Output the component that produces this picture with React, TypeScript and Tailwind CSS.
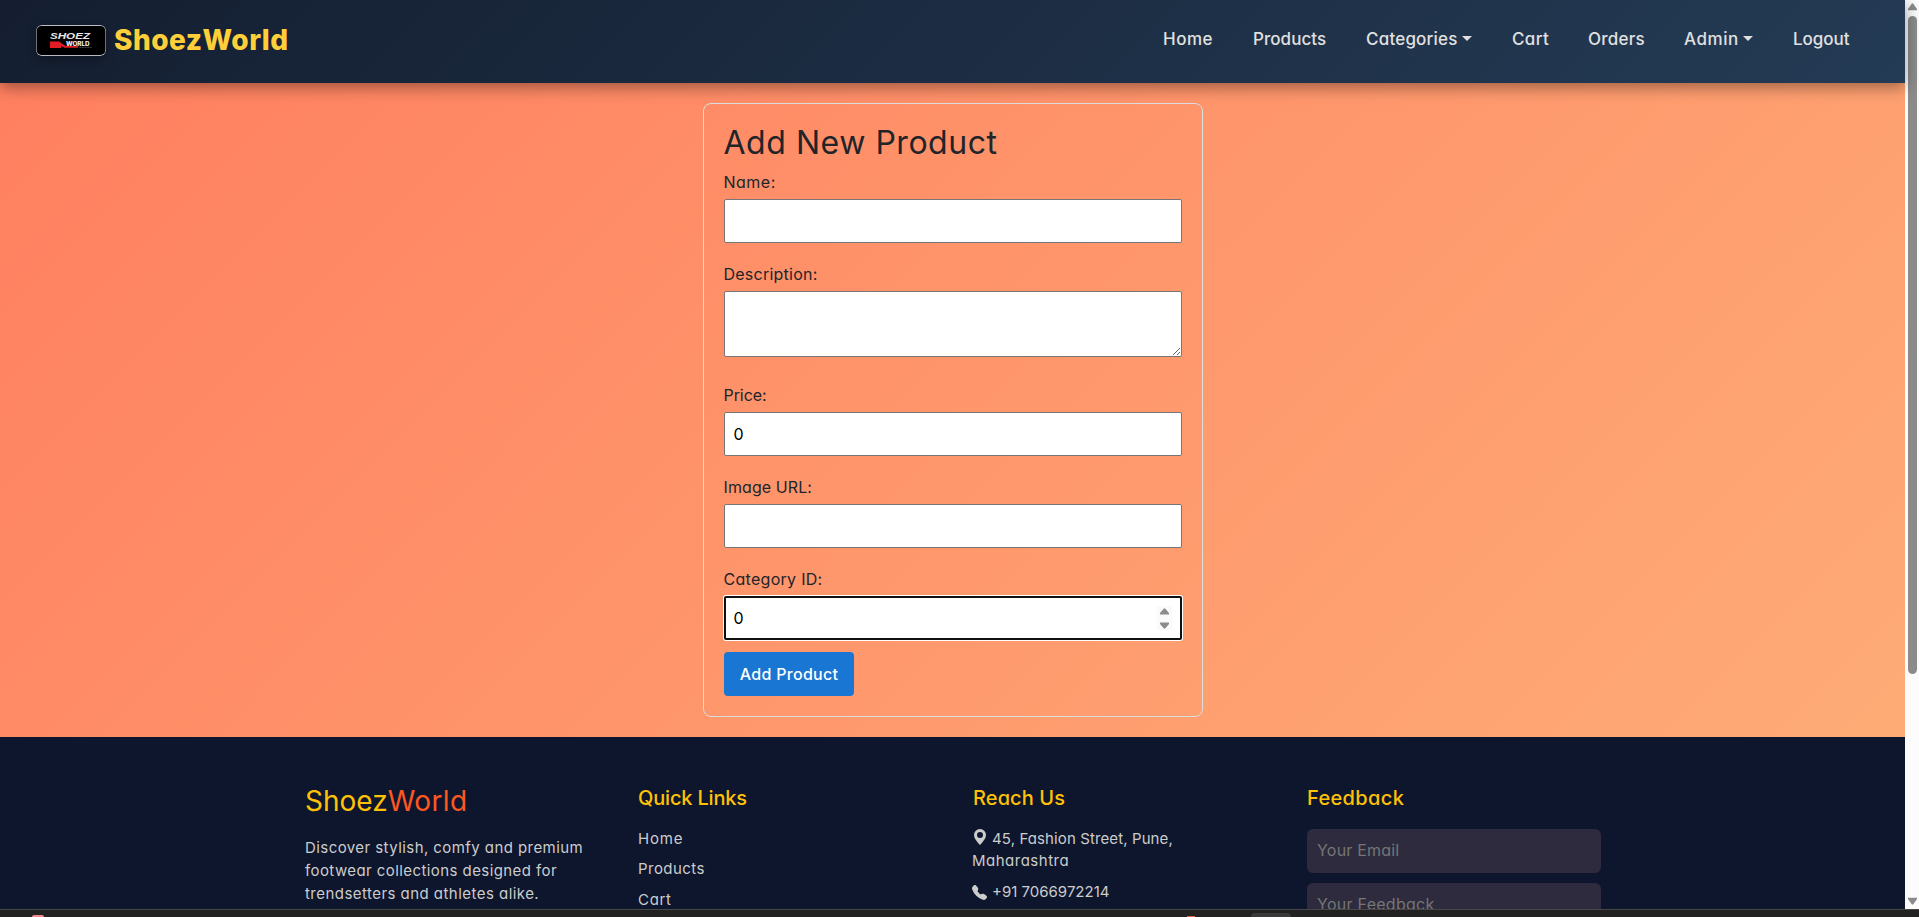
import { BsGeoAltFill, BsTelephoneFill } from "react-icons/bs";

function Logo() {
  return (
    <svg
      width="70"
      height="31"
      viewBox="0 0 70 31"
      className="rounded-[6px] shadow-[0_4px_10px_rgba(0,0,0,0.3)]"
    >
      <rect width="70" height="31" rx="5" fill="#b9bcc2" />
      <rect x="0.6" y="1" width="68.8" height="29" rx="5" fill="#000" />
      <text x="14" y="14.4" fontFamily="Liberation Sans" fontSize="9" fontWeight="700" fontStyle="italic" fill="#e8e8e8" textLength="40" lengthAdjust="spacingAndGlyphs">
        SHOEZ
      </text>
      <path d="M14 16.500h9l6.500 4.500h12.500v1.800H28.500l-3.500-2V23H14z" fill="#e31b23" />
      <text x="30" y="20.600" fontFamily="Inter" fontSize="5.6" fontWeight="800" fill="#f2f2f2" textLength="23.500" lengthAdjust="spacingAndGlyphs">
        WORLD
      </text>
      <path d="M43.500 22.300h12" stroke="#666" strokeWidth="0.8" strokeDasharray="2 0.6" />
    </svg>
  );
}

function Caret() {
  return <span className="mb-px ml-[4px] h-0 w-0 border-x-[5px] border-t-[5px] border-x-transparent border-t-[#e0e0e0]" />;
}

function Header() {
  return (
    <header className="relative z-10 flex h-[83px] shrink-0 items-center bg-[linear-gradient(135deg,#141e30,#243b55)] pr-14 pb-[3px] pl-9 shadow-[0_4px_15px_rgba(0,0,0,0.4)]">
      <div className="mt-px flex">
        <Logo />
      </div>
      <span className="ml-[8px] text-[28px] leading-9 font-extrabold tracking-[0.5px] text-[#ffcf3a]">ShoezWorld</span>
      <nav className="mb-[2px] ml-auto flex text-[17px] leading-6 font-medium text-[#e0e0e0]">
        <a className="w-[90px] tracking-[0.5px]">Home</a>
        <a className="w-[113px] tracking-[0.05px]">Products</a>
        <a className="flex w-[146px] items-center tracking-[0.2px]">Categories<Caret /></a>
        <a className="w-[76px] tracking-[0.4px]">Cart</a>
        <a className="w-[96px] tracking-[0.25px]">Orders</a>
        <a className="flex w-[109px] items-center tracking-[0.55px]">Admin<Caret /></a>
        <a className="w-[56px] tracking-[-0.05px]">Logout</a>
      </nav>
    </header>
  );
}

const field = "block h-[44px] w-full rounded-[2px] border border-[#767676] bg-white px-[9px] text-base text-black outline-none";

function ProductForm() {
  return (
    <form className="h-[614px] w-[500px] rounded-lg border border-[#dddddd] px-5 pt-5 text-base leading-6 text-[#212529]">
      <h2 className="h-[46px] text-[32px] leading-[37px] tracking-[0.53px]">Add New Product</h2>
      <label className="block tracking-[0.5px]">Name:</label>
      <input className={`${field} mt-[5px]`} />
      <label className="mt-[19px] block tracking-[0.24px]">Description:</label>
      <textarea className="mt-[5px] block h-[66px] w-full resize rounded-[2px] border border-[#767676] bg-white outline-none" />
      <label className="mt-[26px] block tracking-[-0.08px]">Price:</label>
      <input className={`${field} mt-[5px]`} defaultValue="0" />
      <label className="mt-[19px] block tracking-[0.09px]">Image URL:</label>
      <input className={`${field} mt-[5px]`} />
      <label className="mt-[19px] block tracking-[0.29px]">Category ID:</label>
      <div className="mt-[5px] flex h-[44px] items-center justify-between rounded-[2px] border-2 border-[#101010] bg-white pr-2 pl-2 text-black shadow-[0_0_0_1px_#fff]">
        <span>0</span>
        <span className="flex h-6 w-[15px] items-center justify-center bg-[#fafafa]">
          <svg width="9" height="21" viewBox="0 0 9 21" fill="#8b8b8b">
            <path d="M3.700 0.700q.8-.8 1.600 0L9 5v1.500H0V5zM3.700 20.300q.8.8 1.600 0L9 16v-1.500H0V16z" />
          </svg>
        </span>
      </div>
      <button type="button" className="mt-3 h-11 w-[130px] rounded bg-[#1976d2] pb-px pl-px text-center font-medium tracking-[0.3px] text-white">
        Add Product
      </button>
    </form>
  );
}

const heading = "text-[20px] leading-6 font-medium text-[#ffc107]";

function Footer() {
  return (
    <footer className="flex flex-1 overflow-hidden bg-[#0d162d] pl-[305px] text-[15px] text-[#cccccc]">
      <div className="w-[333px] pt-[46px]">
        <h3 className="text-[28px] leading-9 text-[#ffc107]">
          Shoez<span className="tracking-[0.4px] text-[#ff5722]">World</span>
        </h3>
        <p className="mt-[17px] leading-[23px] whitespace-nowrap">
          <span className="block tracking-[0.43px]">Discover stylish, comfy and premium</span>
          <span className="block tracking-[0.42px]">footwear collections designed for</span>
          <span className="block tracking-[0.46px]">trendsetters and athletes alike.</span>
        </p>
      </div>
      <div className="w-[334px] pt-[49px]">
        <h4 className={`${heading} tracking-[-0.17px]`}>Quick Links</h4>
        <ul className="mt-[18px] leading-[22px]">
          <li className="tracking-[0.8px]">Home</li>
          <li className="mt-2 tracking-[0.46px]">Products</li>
          <li className="mt-[9px] tracking-[0.7px]">Cart</li>
        </ul>
      </div>
      <div className="w-[335px] pt-[49px] pl-px">
        <h4 className={`${heading} tracking-[0.1px]`}>Reach Us</h4>
        <p className="mt-[18px] leading-[22px]">
          <span className="flex items-center tracking-[0.11px]">
            <BsGeoAltFill className="-ml-px mr-[4px] mb-[4px]" size={16} />
            45, Fashion Street, Pune,
          </span>
          <span className="-ml-px block tracking-[0.5px]">Maharashtra</span>
        </p>
        <p className="mt-[9px] flex items-center leading-[22px]">
          <BsTelephoneFill className="-ml-px mr-[5px]" size={15} />
          +91 7066972214
        </p>
      </div>
      <div className="w-[294px] pt-[49px]">
        <h4 className={`${heading} tracking-[0.35px]`}>Feedback</h4>
        <div className="mt-[19px] h-11 rounded-md bg-[#2d2b3d] px-[10px] text-base leading-[43px] tracking-[0.2px] text-[#757575]">Your Email</div>
        <div className="mt-[10px] h-20 rounded-md bg-[#2d2b3d] px-[10px] pt-[9px] text-base leading-6 tracking-[0.27px] text-[#757575]">Your Feedback</div>
      </div>
    </footer>
  );
}

function Scrollbar() {
  return (
    <div className="flex w-[14px] flex-col items-center bg-[#fcfcfc] pl-px">
      <svg width="9" height="8" viewBox="0 0 9 8" className="mt-[3px]" fill="#8b8b8b">
        <path d="M3.700 0.700q.8-.9 1.600 0L9 6v1.200H0V6z" />
      </svg>
      <div className="mt-[5px] h-[658px] w-[9px] rounded-full bg-[#8b8b8b]" />
      <svg width="9" height="8" viewBox="0 0 9 8" className="mt-auto mb-1" fill="#8b8b8b">
        <path d="M3.700 7.300q.8.900 1.600 0L9 2V.8H0V2z" />
      </svg>
    </div>
  );
}

export default function App() {
  return (
    <div className="flex h-[917px] w-[1919px] flex-col overflow-hidden font-['Inter',sans-serif] [font-feature-settings:'cv11']">
      <div className="flex h-[909px]">
        <div className="flex w-[1905px] flex-col bg-[linear-gradient(135deg,#ff7e5f,#feb47b)] bg-[length:1905px_1213px]">
          <Header />
          <main className="flex h-[654px] shrink-0 justify-center pt-5">
            <ProductForm />
          </main>
          <Footer />
        </div>
        <Scrollbar />
      </div>
      <div className="flex h-2 items-end overflow-hidden border-t border-[#474747] bg-[#222222]">
        <div className="ml-8 h-[2px] w-3 rounded-t-full bg-[#f08a8f]" />
        <div className="ml-[1143px] h-px w-2 bg-[#e0654f]" />
        <div className="ml-[56px] h-1 w-10 rounded-t bg-[#3a3a3a]" />
      </div>
    </div>
  );
}
